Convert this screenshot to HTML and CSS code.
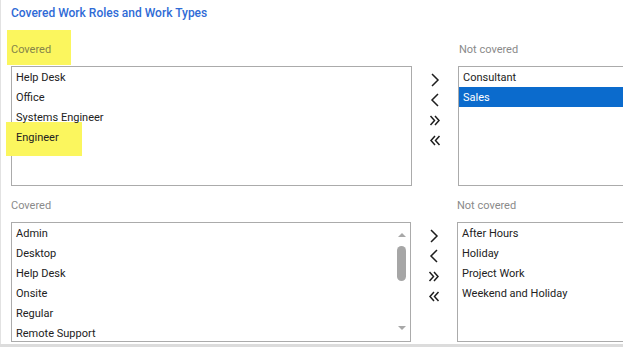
FILE: index.html
```html
<!DOCTYPE html>
<html>
<head>
<meta charset="utf-8">
<link rel="stylesheet" href="styles.css">
</head>
<body>
<div class="card">
  <h2 class="title">Covered Work Roles and Work Types</h2>

  <section class="picker picker-top">
    <div class="label label-hl"><span class="label-text">Covered</span></div>
    <div></div>
    <div class="label">Not covered</div>

    <div class="box">
      <ul class="items">
        <li>Help Desk</li>
        <li>Office</li>
        <li>Systems Engineer</li>
        <li>Engineer</li>
      </ul>
      <div class="hl-engineer"></div>
    </div>
    <div class="moves">
      <svg class="ic" viewBox="0 0 14 14"><path d="M4 1 L10 7 L4 13"/></svg>
      <svg class="ic" viewBox="0 0 14 14"><path d="M10 1 L4 7 L10 13"/></svg>
      <svg class="ic" viewBox="0 0 14 14"><path d="M2.5 3 L6.5 7.5 L2.5 12 M7 3 L11 7.5 L7 12"/></svg>
      <svg class="ic" viewBox="0 0 14 14"><path d="M7 3 L3 7.5 L7 12 M11.5 3 L7.5 7.5 L11.5 12"/></svg>
    </div>
    <div class="box">
      <ul class="items">
        <li>Consultant</li>
        <li class="sel">Sales</li>
      </ul>
    </div>
  </section>

  <section class="picker picker-bottom">
    <div class="label">Covered</div>
    <div></div>
    <div class="label">Not covered</div>

    <div class="box box-scroll">
      <ul class="items">
        <li>Admin</li>
        <li>Desktop</li>
        <li>Help Desk</li>
        <li>Onsite</li>
        <li>Regular</li>
        <li>Remote Support</li>
      </ul>
      <div class="sbar">
        <div class="sbtn"><span class="tri-up"></span></div>
        <div class="strack"><div class="thumb"></div></div>
        <div class="sbtn sbtn-down"><span class="tri-down"></span></div>
      </div>
    </div>
    <div class="moves">
      <svg class="ic" viewBox="0 0 14 14"><path d="M4 1 L10 7 L4 13"/></svg>
      <svg class="ic" viewBox="0 0 14 14"><path d="M10 1 L4 7 L10 13"/></svg>
      <svg class="ic" viewBox="0 0 14 14"><path d="M2.5 3 L6.5 7.5 L2.5 12 M7 3 L11 7.5 L7 12"/></svg>
      <svg class="ic" viewBox="0 0 14 14"><path d="M7 3 L3 7.5 L7 12 M11.5 3 L7.5 7.5 L11.5 12"/></svg>
    </div>
    <div class="box">
      <ul class="items">
        <li>After Hours</li>
        <li>Holiday</li>
        <li>Project Work</li>
        <li>Weekend and Holiday</li>
      </ul>
    </div>
  </section>
</div>
</body>
</html>
```

FILE: styles.css
```css
html, body {
  margin: 0;
  padding: 0;
}
body {
  background: #dcdcdc;
  font-family: Roboto, "Liberation Sans", Arial, sans-serif;
  width: 623px;
  height: 347px;
  overflow: hidden;
}
.card {
  background: #fff;
  border-left: 1px solid #e2e2e2;
  height: 344px;
  width: 622px;
  overflow: hidden;
}
.title {
  margin: 0;
  padding-left: 10px;
  height: 26px;
  line-height: 27px;
  font-size: 12px;
  font-weight: 500;
  color: #2f6bd6;
}
.picker {
  display: grid;
  padding-left: 10px;
}
.picker-top {
  grid-template-columns: 401px 46px 400px;
  grid-template-rows: 40px 120px;
}
.picker-bottom {
  grid-template-columns: 400px 46px 400px;
  grid-template-rows: 36px 120px;
}
.label {
  font-size: 11px;
  line-height: 14px;
  color: #8a8a8a;
  position: relative;
}
.picker-top .label { padding-top: 17px; }
.picker-bottom .label { padding-top: 13px; }
.picker-top .label:nth-child(3) { padding-left: 1px; }

.label-hl::before {
  content: "";
  position: absolute;
  left: -4px;
  top: 4px;
  width: 64px;
  height: 35px;
  background: #fbf65e;
}
.label-text {
  position: relative;
  color: #85844a;
}

.box {
  border: 1px solid #ababab;
  position: relative;
  box-sizing: border-box;
  background: #fff;
}
.items {
  list-style: none;
  margin: 0;
  padding: 0;
  position: relative;
  z-index: 2;
}
.items li {
  height: 19px;
  padding-top: 1px;
  line-height: 20px;
  font-size: 11px;
  color: #222;
  padding-left: 4px;
  white-space: nowrap;
}
.items li.sel {
  background: #0b6bcd;
  color: #fff;
}
.hl-engineer {
  position: absolute;
  left: -6px;
  top: 55px;
  width: 76px;
  height: 34px;
  background: #fbf65e;
  z-index: 1;
}
.moves {
  display: flex;
  flex-direction: column;
  align-items: center;
  padding-top: 7px;
}
.ic {
  width: 14px;
  height: 14px;
  margin-bottom: 6px;
  fill: none;
  stroke: #1e1e1e;
  stroke-width: 1.5;
}
.box-scroll {
  display: flex;
  overflow: hidden;
}
.box-scroll .items {
  flex: 1;
}
.sbar {
  width: 17px;
  display: flex;
  flex-direction: column;
  background: #fff;
}
.sbtn {
  height: 23px;
  display: flex;
  align-items: center;
  justify-content: center;
}
.sbtn-down { height: 26px; }
.strack {
  flex: 1;
  display: flex;
  justify-content: center;
}
.thumb {
  width: 9px;
  height: 35px;
  border-radius: 5px;
  background: #a6a6a6;
}
.tri-up {
  width: 0;
  height: 0;
  border-left: 4px solid transparent;
  border-right: 4px solid transparent;
  border-bottom: 4px solid #a8a8a8;
}
.tri-down {
  width: 0;
  height: 0;
  border-left: 4px solid transparent;
  border-right: 4px solid transparent;
  border-top: 4px solid #a8a8a8;
}
```
